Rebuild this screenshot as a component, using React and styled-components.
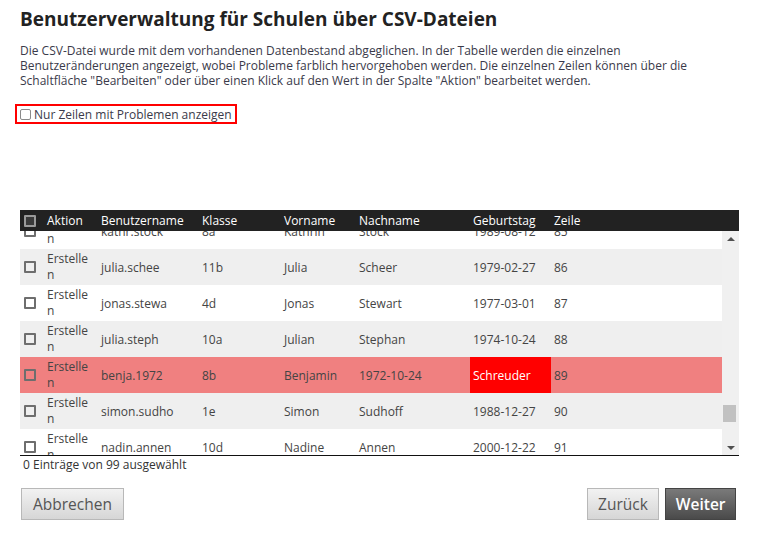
import React from "react";
import styled, { createGlobalStyle, css } from "styled-components";

const GlobalStyle = createGlobalStyle`
  html, body { margin: 0; padding: 0; background: #fff; }
  body { font-family: "Open Sans", "DejaVu Sans", sans-serif; color: #333; }
`;

const Page = styled.div`
  width: 762px;
  height: 534px;
  box-sizing: border-box;
  padding: 5px 23px 0 20px;
  display: flex;
  flex-direction: column;
`;

const Title = styled.h1`
  margin: 0;
  font-size: 19px;
  line-height: 28px;
  font-weight: 700;
  color: #222;
`;

const Intro = styled.p`
  margin: 10px 0 0;
  font-size: 12px;
  line-height: 15px;
  color: #3a3a4a;
  width: 690px;
`;

const FilterLabel = styled.label`
  margin: 16px 0 0 -5px;
  align-self: flex-start;
  display: flex;
  align-items: center;
  gap: 3px;
  height: 16px;
  padding: 0 3px 0 3px;
  border: 2px solid #ff0000;
  font-size: 12px;
  color: #3a3a4a;
`;

const SmallBox = styled.span`
  width: 9px;
  height: 9px;
  border: 1px solid #8a8a8a;
  border-radius: 2px;
  background: #fff;
`;

const Table = styled.div`
  margin-top: 86px;
  display: flex;
  flex-direction: column;
  border-bottom: 1px solid #111;
`;

const cols = css`
  display: grid;
  grid-template-columns: 24px 54px 101px 82px 75px 114px 81px 1fr;
`;

const HeadRow = styled.div`
  ${cols};
  height: 21px;
  background: #222;
  color: #fff;
  font-size: 12px;
  font-weight: 400;
  align-items: center;
`;

const HeadCell = styled.div`
  padding-left: 3px;
  white-space: nowrap;
`;

const BodyWrap = styled.div`
  display: flex;
  height: 224px;
`;

const Viewport = styled.div`
  flex: 1;
  overflow: hidden;
`;

const RowList = styled.div`
  margin-top: ${(p) => -p.$offset}px;
`;

const Row = styled.div`
  ${cols};
  height: 36px;
  align-items: center;
  font-size: 12px;
  color: #444;
  background: ${(p) => (p.$error ? "#f08080" : p.$alt ? "#efefef" : "#fff")};
`;

const Cell = styled.div`
  align-self: stretch;
  display: flex;
  align-items: center;
  padding-left: 3px;
  white-space: nowrap;
  ${(p) =>
    p.$bad &&
    css`
      background: #ff0000;
      color: #fff;
    `}
`;

const ActionCell = styled.div`
  padding-left: 3px;
  width: 46px;
  word-break: break-all;
  line-height: 16px;
`;

const CheckCell = styled.div`
  display: flex;
  align-items: center;
  padding-left: 4px;
`;

const Check = styled.span`
  width: 8px;
  height: 8px;
  border: 2px solid #6e6e6e;
  border-radius: 1px;
  background: ${(p) => (p.$dark ? "#3a3a3a" : "transparent")};
  ${(p) => p.$dark && css`border-color: #9a9a9a;`}
`;

const ScrollBar = styled.div`
  width: 17px;
  background: #f0f0f0;
  display: flex;
  flex-direction: column;
  align-items: center;
  justify-content: space-between;
  padding: 6px 0 5px;
  box-sizing: border-box;
  position: relative;
`;

const Arrow = styled.span`
  width: 0;
  height: 0;
  border-left: 4px solid transparent;
  border-right: 4px solid transparent;
  ${(p) =>
    p.$up
      ? css`border-bottom: 4px solid #505050;`
      : css`border-top: 4px solid #505050;`}
`;

const Thumb = styled.span`
  position: absolute;
  left: 1px;
  top: 174px;
  width: 13px;
  height: 17px;
  background: #c1c1c1;
`;

const Count = styled.div`
  font-size: 12px;
  line-height: 16px;
  padding: 1px 0 0 3px;
  color: #333;
`;

const Actions = styled.div`
  margin: 15px 3px 0 1px;
  display: flex;
  justify-content: space-between;
`;

const Group = styled.div`
  display: flex;
  gap: 6px;
`;

const Button = styled.button`
  height: 32px;
  padding: 0 ${(p) => p.$pad}px;
  font-family: "Open Sans", sans-serif;
  font-size: 15.5px;
  border: 1px solid ${(p) => (p.$primary ? "#444" : "#b8b8b8")};
  background: ${(p) =>
    p.$primary
      ? "linear-gradient(#7a7a7a, #4a4a4a)"
      : "linear-gradient(#f2f2f2, #d6d6d6)"};
  color: ${(p) => (p.$primary ? "#fff" : "#555")};
  font-weight: ${(p) => (p.$primary ? 600 : 400)};
  border-radius: 0;
`;

const headers = ["Aktion", "Benutzername", "Klasse", "Vorname", "Nachname", "Geburtstag", "Zeile"];

const rows = [
  ["kathr.stock", "8a", "Kathrin", "Stock", "1989-08-12", "85"],
  ["julia.schee", "11b", "Julia", "Scheer", "1979-02-27", "86"],
  ["jonas.stewa", "4d", "Jonas", "Stewart", "1977-03-01", "87"],
  ["julia.steph", "10a", "Julian", "Stephan", "1974-10-24", "88"],
  ["benja.1972", "8b", "Benjamin", "1972-10-24", "Schreuder", "89", true],
  ["simon.sudho", "1e", "Simon", "Sudhoff", "1988-12-27", "90"],
  ["nadin.annen", "10d", "Nadine", "Annen", "2000-12-22", "91"],
  ["chris.wagne", "9c", "Christian", "Wagner", "1990-04-17", "92"],
];

export default function App() {
  return (
    <>
      <GlobalStyle />
      <Page>
        <Title>Benutzerverwaltung für Schulen über CSV-Dateien</Title>
        <Intro>
          Die CSV-Datei wurde mit dem vorhandenen Datenbestand abgeglichen. In der Tabelle werden die einzelnen
          Benutzeränderungen angezeigt, wobei Probleme farblich hervorgehoben werden. Die einzelnen Zeilen können über die
          Schaltfläche "Bearbeiten" oder über einen Klick auf den Wert in der Spalte "Aktion" bearbeitet werden.
        </Intro>
        <FilterLabel>
          <SmallBox />
          Nur Zeilen mit Problemen anzeigen
        </FilterLabel>
        <Table>
          <HeadRow>
            <CheckCell>
              <Check $dark />
            </CheckCell>
            {headers.map((h) => (
              <HeadCell key={h}>{h}</HeadCell>
            ))}
          </HeadRow>
          <BodyWrap>
            <Viewport>
              <RowList $offset={18}>
                {rows.map((r, i) => {
                  const err = !!r[6];
                  return (
                    <Row key={r[5]} $alt={i % 2 === 1} $error={err}>
                      <CheckCell>
                        <Check />
                      </CheckCell>
                      <ActionCell>Erstellen</ActionCell>
                      <Cell>{r[0]}</Cell>
                      <Cell>{r[1]}</Cell>
                      <Cell>{r[2]}</Cell>
                      <Cell>{r[3]}</Cell>
                      <Cell $bad={err}>{r[4]}</Cell>
                      <Cell>{r[5]}</Cell>
                    </Row>
                  );
                })}
              </RowList>
            </Viewport>
            <ScrollBar>
              <Arrow $up />
              <Thumb />
              <Arrow />
            </ScrollBar>
          </BodyWrap>
        </Table>
        <Count>0 Einträge von 99 ausgewählt</Count>
        <Actions>
          <Button $pad={11}>Abbrechen</Button>
          <Group>
            <Button $pad={10.5}>Zurück</Button>
            <Button $primary $pad={9.5}>Weiter</Button>
          </Group>
        </Actions>
      </Page>
    </>
  );
}
